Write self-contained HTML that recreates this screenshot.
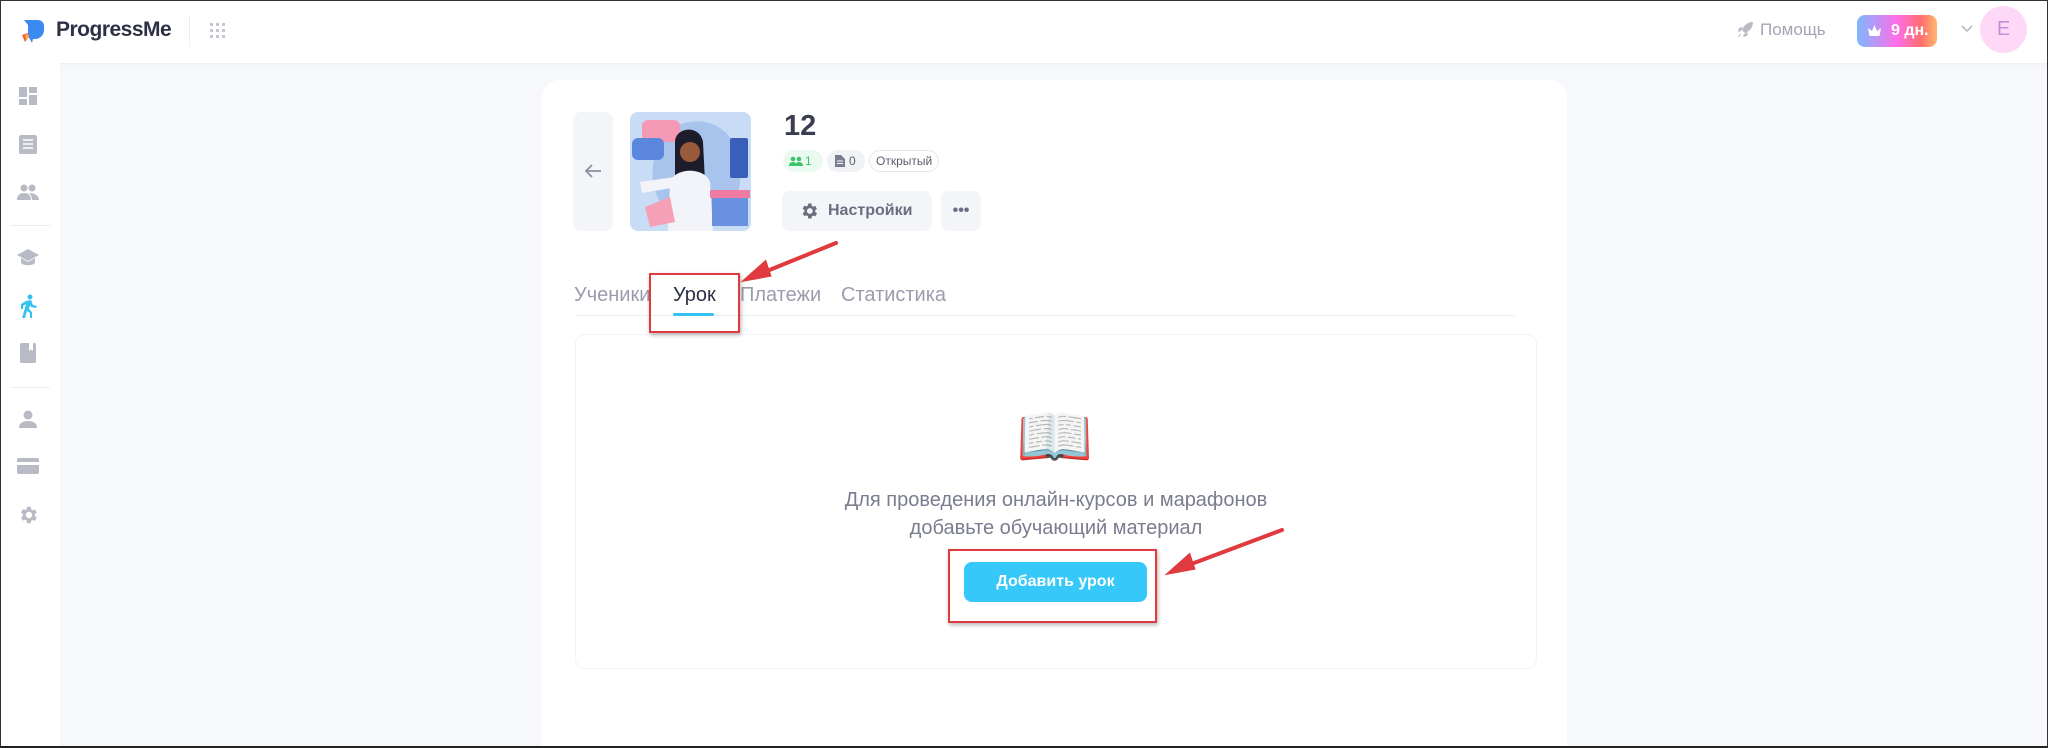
<!DOCTYPE html>
<html><head><meta charset="utf-8"><style>
*{margin:0;padding:0;box-sizing:border-box}
html,body{width:2048px;height:748px;overflow:hidden}
body{background:#f7f8fb;font-family:"Liberation Sans","DejaVu Sans",sans-serif;position:relative}
.frame{position:absolute;left:0;top:0;width:2048px;height:748px;border:1px solid #333;border-bottom:2px solid #222;pointer-events:none;z-index:50}
.hdr{position:absolute;left:0;top:0;width:2048px;height:63px;background:#fff;box-shadow:0 1px 4px rgba(0,0,0,.05)}
.side{position:absolute;left:0;top:63px;width:60px;height:685px;background:#fff}
.ab{position:absolute}
.card{position:absolute;left:542px;top:80px;width:1025px;height:668px;background:#fff;border-radius:18px 18px 0 0}
.tab{position:absolute;top:284px;font-size:20px;color:#9a9cae}
.red{position:absolute;border:2px solid #e0393e;box-shadow:1px 2px 4px rgba(0,0,0,.3)}
</style></head><body>
<div class="hdr">
 <svg class="ab" style="left:20px;top:17px" width="27" height="27" viewBox="0 0 27 27"><path d="M4 3h14a6 6 0 0 1 6 6v4a9 9 0 0 1-9 9h-2l-1 4-4-7V8z" fill="#3b8af2"/><path d="M2 18l6-2 1 4-4 5z" fill="#f25a3c"/><path d="M5 18l3-1 1 3-3 3z" fill="#ffb33c"/></svg>
 <div class="ab" style="left:56px;top:18px;font-size:21px;font-weight:bold;color:#2e3045;letter-spacing:-0.5px">ProgressMe</div>
 <div class="ab" style="left:189px;top:15px;width:1px;height:32px;background:#eceef3"></div>
 <svg class="ab" style="left:210px;top:23px" width="15" height="15"><g fill="#c4c6d2"><rect x="0" y="0" width="3" height="3"/><rect x="6" y="0" width="3" height="3"/><rect x="12" y="0" width="3" height="3"/><rect x="0" y="6" width="3" height="3"/><rect x="6" y="6" width="3" height="3"/><rect x="12" y="6" width="3" height="3"/><rect x="0" y="12" width="3" height="3"/><rect x="6" y="12" width="3" height="3"/><rect x="12" y="12" width="3" height="3"/></g></svg>
 <svg class="ab" style="left:1735px;top:20px" width="20" height="20" viewBox="0 0 20 20"><path d="M18 2c-5 0-9 3-11 8l3 3c5-2 8-6 8-11zM6 11l-3 1 1-4 4-1zM9 14l-1 3 4-1 1-4zM5 14l-3 4 4-3z" fill="#b8bac6"/></svg>
 <div class="ab" style="left:1760px;top:20px;font-size:17px;color:#a3a5b3">Помощь</div>
 <div class="ab" style="left:1857px;top:15px;width:80px;height:32px;border-radius:8px;background:linear-gradient(90deg,#7db8ff,#ff6ee8 50%,#ff6e6e 80%,#ffb86e);color:#fff;font-weight:bold;font-size:16px;line-height:32px;padding-left:34px">9 дн.</div>
 <svg class="ab" style="left:1867px;top:24px" width="15" height="13"><path d="M1 4l4 3 2.5-6 2.5 6 4-3-1.5 8h-10z" fill="#fff"/></svg>
 <svg class="ab" style="left:1961px;top:25px" width="12" height="8"><path d="M1 1l5 5 5-5" stroke="#b8bac6" stroke-width="1.6" fill="none"/></svg>
 <div class="ab" style="left:1980px;top:6px;width:47px;height:47px;border-radius:50%;background:#fdd9f7;color:#c98ed9;font-size:20px;text-align:center;line-height:47px">E</div>
</div>
<div class="side">
 <svg class="ab" style="left:19px;top:24px" width="18" height="18"><g fill="#b8bac6"><rect x="0" y="0" width="8" height="10"/><rect x="10" y="0" width="8" height="6"/><rect x="0" y="12" width="8" height="6"/><rect x="10" y="8" width="8" height="10"/></g></svg>
 <svg class="ab" style="left:19px;top:72px" width="18" height="19"><rect width="18" height="19" rx="2" fill="#b8bac6"/><g stroke="#fff" stroke-width="1.5"><path d="M4 5h10M4 9h10M4 13h10"/></g></svg>
 <svg class="ab" style="left:16px;top:121px" width="24" height="16"><g fill="#b8bac6"><circle cx="8" cy="4" r="3.5"/><circle cx="16" cy="4" r="3.5"/><path d="M1 16c0-5 3-7 7-7s7 2 7 7zM13 9c5 0 10 2 10 7h-7c0-3-1-5-3-7z"/></g></svg>
 <div class="ab" style="left:10px;top:162px;width:40px;height:1px;background:#eceef3"></div>
 <svg class="ab" style="left:16px;top:185px" width="24" height="20"><path d="M12 1L1 7l11 6 11-6zM5 10v5c3 3 11 3 14 0v-5l-7 4z" fill="#b8bac6"/></svg>
 <svg class="ab" style="left:19px;top:231px" width="18" height="24"><g fill="#35c1f1"><circle cx="11" cy="3" r="2.5"/><path d="M7 7l5-1 2 5 4 1-1 2-5-1-1-2-1 4 3 3v6h-2v-5l-3-2-2 7H3l3-10 1-4-3 2v3H2v-5z"/></g></svg>
 <svg class="ab" style="left:20px;top:280px" width="16" height="20"><rect width="16" height="20" rx="1.5" fill="#b8bac6"/><path d="M9 0h4v8l-2-1.5L9 8z" fill="#fff"/></svg>
 <div class="ab" style="left:10px;top:324px;width:40px;height:1px;background:#eceef3"></div>
 <svg class="ab" style="left:19px;top:347px" width="18" height="18"><g fill="#b8bac6"><circle cx="9" cy="5" r="4.5"/><path d="M0 18c0-5 4-7 9-7s9 2 9 7z"/></g></svg>
 <svg class="ab" style="left:17px;top:395px" width="22" height="16"><rect width="22" height="16" rx="2" fill="#b8bac6"/><rect y="4" width="22" height="3" fill="#fff"/></svg>
 <svg class="ab" style="left:17px;top:441px" width="22" height="22" viewBox="0 0 24 24"><path fill="#b8bac6" d="M19.4 13a7.5 7.5 0 0 0 0-2l2.1-1.6-2-3.5-2.5 1a7 7 0 0 0-1.7-1L15 3h-4l-.4 2.6a7 7 0 0 0-1.7 1l-2.5-1-2 3.5L6.6 11a7.5 7.5 0 0 0 0 2l-2.2 1.6 2 3.5 2.5-1a7 7 0 0 0 1.7 1L11 21h4l.4-2.6a7 7 0 0 0 1.7-1l2.5 1 2-3.5zM13 15.5a3.5 3.5 0 1 1 0-7 3.5 3.5 0 0 1 0 7z"/></svg>
</div>
<div class="card"></div>
<div class="ab" style="left:573px;top:112px;width:40px;height:119px;background:#f4f5f8;border-radius:8px"></div>
<svg class="ab" style="left:584px;top:163px" width="18" height="16"><path d="M17 8H2M8 2L2 8l6 6" stroke="#8d8fa0" stroke-width="1.8" fill="none"/></svg>
<svg class="ab" style="left:630px;top:112px;border-radius:8px" width="121" height="119" viewBox="0 0 121 119">
 <rect width="121" height="119" fill="#c9dcf5"/>
 <path d="M60 10c30-5 55 20 50 60s-40 50-70 30-20-85 20-90z" fill="#a9c4ec"/>
 <rect x="12" y="8" width="38" height="22" rx="6" fill="#f59ab4"/>
 <rect x="2" y="26" width="32" height="22" rx="6" fill="#5b86dd"/>
 <rect x="100" y="26" width="18" height="40" rx="2" fill="#3a5fb8"/>
 <path d="M45 30c0-15 25-18 28 0l2 40H45z" fill="#1c1c2a"/>
 <circle cx="60" cy="40" r="10" fill="#9a5a3c"/>
 <path d="M40 70c5-15 35-15 40 0l3 49H38z" fill="#f2f4fa"/>
 <path d="M10 70l35-5 2 10-35 6z" fill="#f2f4fa"/>
 <path d="M15 95l25-10 5 25-25 5z" fill="#f6a0b8"/>
 <rect x="82" y="84" width="36" height="30" fill="#6a90e0"/>
 <rect x="80" y="78" width="40" height="8" fill="#f07aa0"/>
</svg>
<div class="ab" style="left:784px;top:110px;font-size:29px;font-weight:bold;color:#3b3d50">12</div>
<div class="ab" style="left:783px;top:150px;width:40px;height:22px;border-radius:11px;background:#eafaf0;color:#3cc46a;font-size:12px;line-height:22px;padding-left:22px">1</div>
<svg class="ab" style="left:789px;top:156px" width="14" height="10"><g fill="#3cc46a"><circle cx="4" cy="3" r="2.3"/><circle cx="10" cy="3" r="2.3"/><path d="M0 10c0-3 2-4 4-4s4 1 4 4zM7 10c0-3 1-4 3-4s4 1 4 4z"/></g></svg>
<div class="ab" style="left:827px;top:150px;width:38px;height:22px;border-radius:11px;background:#f1f2f6;color:#5b5d6e;font-size:12px;line-height:22px;padding-left:22px">0</div>
<svg class="ab" style="left:835px;top:155px" width="10" height="12"><path d="M0 0h6l4 4v8H0z" fill="#7b7d8e"/><path d="M2 6h6M2 8.5h6" stroke="#fff"/></svg>
<div class="ab" style="left:869px;top:150px;height:22px;border-radius:11px;border:1px solid #e6e7ee;color:#5b5d6e;font-size:12px;line-height:20px;padding:0 6px">Открытый</div>
<div class="ab" style="left:782px;top:191px;width:150px;height:40px;border-radius:8px;background:#f4f5f8;color:#6b6d80;font-size:16px;font-weight:bold;line-height:40px;padding-left:46px">Настройки</div>
<svg class="ab" style="left:799px;top:201px" width="20" height="20" viewBox="0 0 24 24"><path fill="#6b6d80" d="M19.4 13a7.5 7.5 0 0 0 0-2l2.1-1.6-2-3.5-2.5 1a7 7 0 0 0-1.7-1L15 3h-4l-.4 2.6a7 7 0 0 0-1.7 1l-2.5-1-2 3.5L6.6 11a7.5 7.5 0 0 0 0 2l-2.2 1.6 2 3.5 2.5-1a7 7 0 0 0 1.7 1L11 21h4l.4-2.6a7 7 0 0 0 1.7-1l2.5 1 2-3.5zM13 15.5a3.5 3.5 0 1 1 0-7 3.5 3.5 0 0 1 0 7z"/></svg>
<div class="ab" style="left:941px;top:191px;width:40px;height:40px;border-radius:8px;background:#f4f5f8;color:#6b6d80;font-size:16px;font-weight:bold;text-align:center;line-height:40px">•••</div>
<div class="tab" style="left:574px">Ученики</div>
<div class="tab" style="left:673px;color:#2e3045">Урок</div>
<div class="tab" style="left:740px">Платежи</div>
<div class="tab" style="left:841px">Статистика</div>
<div class="ab" style="left:575px;top:315px;width:940px;height:1px;background:#eceef3"></div>
<div class="ab" style="left:673px;top:313px;width:41px;height:3px;background:#35c1f1;border-radius:2px"></div>
<div class="ab" style="left:575px;top:334px;width:962px;height:335px;border:1px solid #f2f3f7;border-radius:10px"></div>
<div class="ab" style="left:1015px;top:400px;width:80px;text-align:center;font-size:62px;line-height:76px;font-family:'Noto Color Emoji','DejaVu Sans',sans-serif">📖</div>
<div class="ab" style="left:700px;top:486px;width:712px;text-align:center;font-size:20px;line-height:28px;color:#7a7c8f">Для проведения онлайн-курсов и марафонов<br>добавьте обучающий материал</div>
<div class="ab" style="left:964px;top:562px;width:183px;height:40px;border-radius:8px;background:#35c8f8;color:#fff;font-weight:bold;font-size:16px;text-align:center;line-height:40px">Добавить урок</div>
<div class="red" style="left:649px;top:273px;width:91px;height:60px"></div>
<div class="red" style="left:948px;top:549px;width:209px;height:74px"></div>
<svg class="ab" style="left:0;top:0;z-index:40" width="2048" height="748"><g stroke="#e0393e" stroke-width="4" fill="#e0393e" stroke-linecap="round"><line x1="836" y1="243" x2="762" y2="273"/><path d="M747 279l18-16 4 12z"/><line x1="1282" y1="530" x2="1186" y2="566"/><path d="M1171 572l18-16 4 12z"/></g></svg>
<div class="frame"></div>
</body></html>
